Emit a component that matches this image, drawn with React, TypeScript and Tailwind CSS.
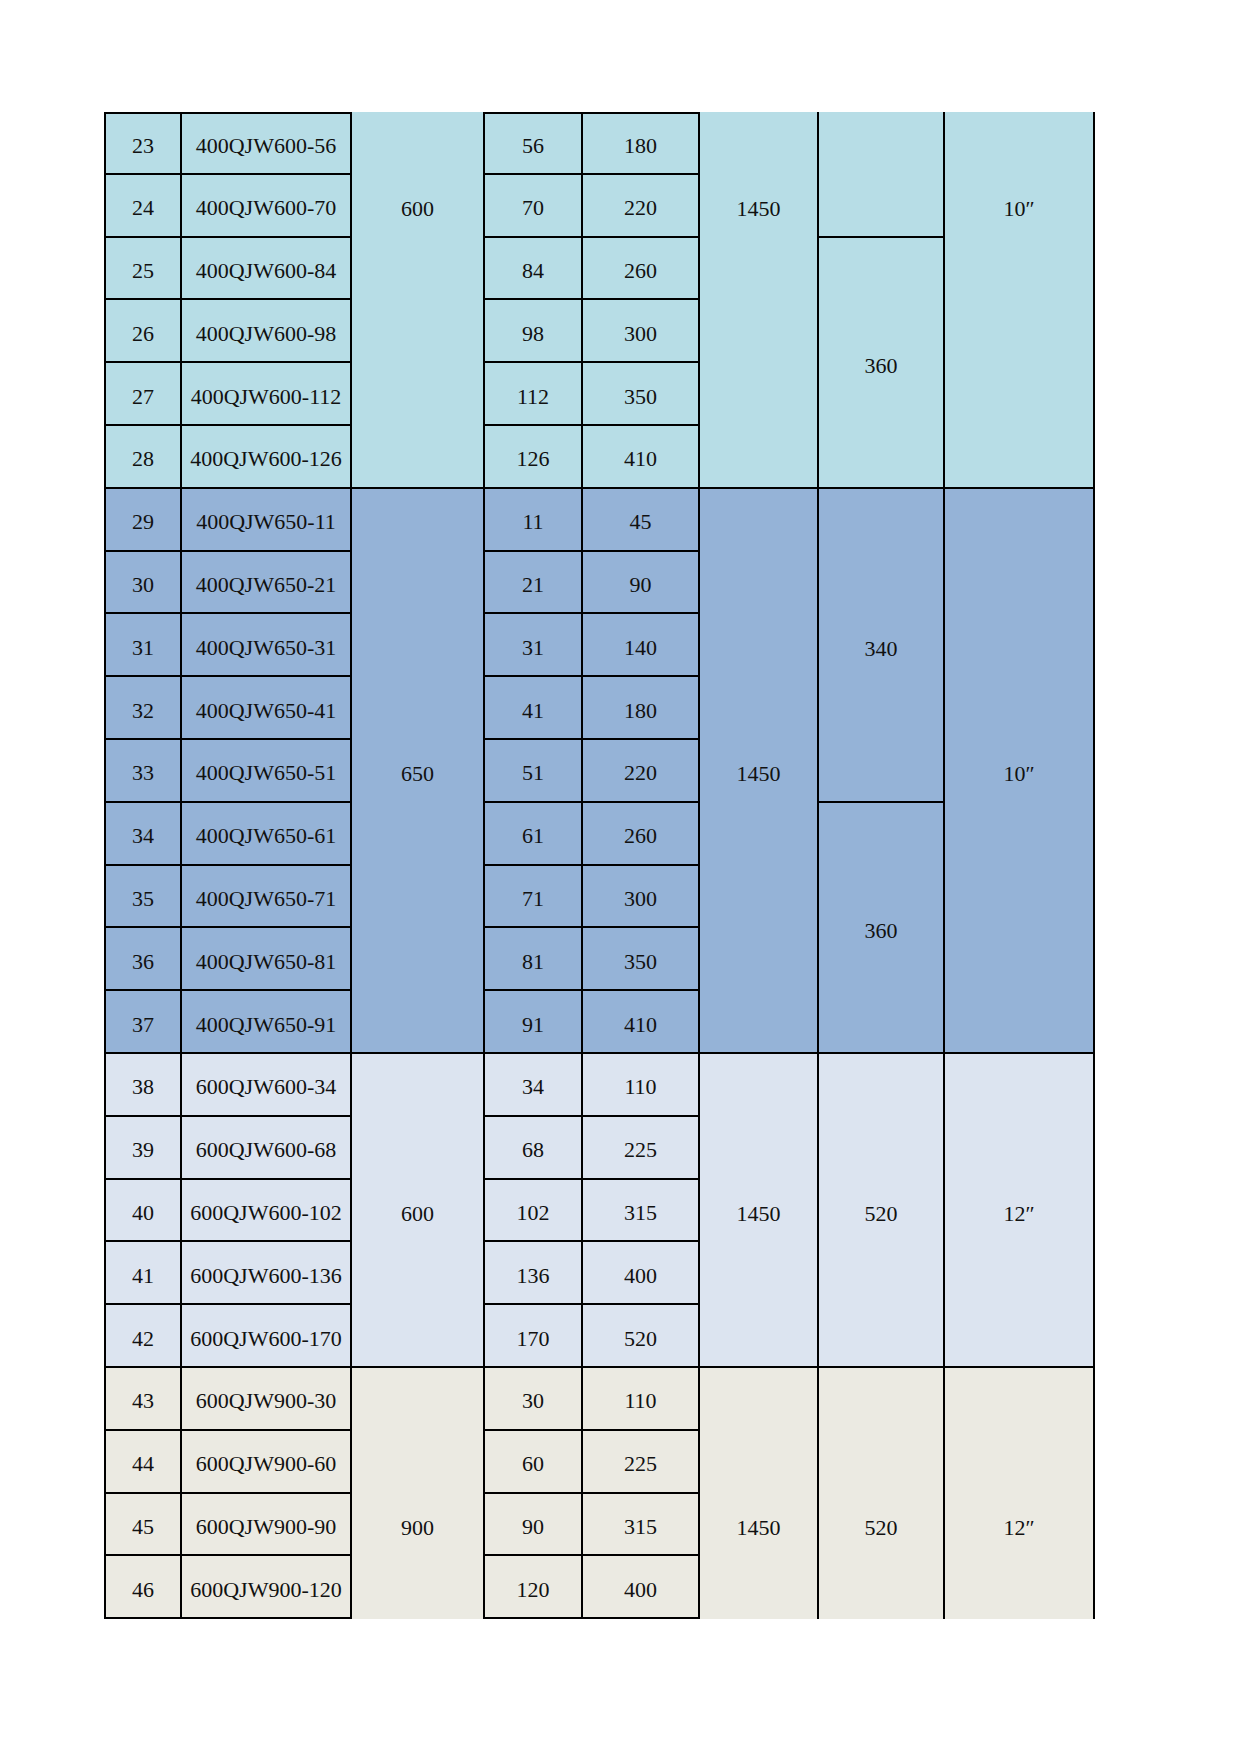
import React from "react";

type Row = [number, string, number, number];
type Seg = { label: string; span: number; at: string };
type Group = {
  bg: string;
  rows: Row[];
  flow: string;
  speed: string;
  size: string;
  at: string; // where the text of the merged columns sits
  power: Seg[];
};

const spanClass: Record<number, string> = {
  2: "row-span-2",
  4: "row-span-4",
  5: "row-span-5",
  6: "row-span-6",
  9: "row-span-9",
};

const groups: Group[] = [
  {
    bg: "bg-[#b7dde6]",
    rows: [
      [23, "400QJW600-56", 56, 180],
      [24, "400QJW600-70", 70, 220],
      [25, "400QJW600-84", 84, 260],
      [26, "400QJW600-98", 98, 300],
      [27, "400QJW600-112", 112, 350],
      [28, "400QJW600-126", 126, 410],
    ],
    flow: "600",
    speed: "1450",
    size: "10″",
    at: "row-start-2",
    power: [
      { label: "", span: 2, at: "row-start-1" },
      { label: "360", span: 4, at: "row-start-2 row-span-2" },
    ],
  },
  {
    bg: "bg-[#95b3d7]",
    rows: [
      [29, "400QJW650-11", 11, 45],
      [30, "400QJW650-21", 21, 90],
      [31, "400QJW650-31", 31, 140],
      [32, "400QJW650-41", 41, 180],
      [33, "400QJW650-51", 51, 220],
      [34, "400QJW650-61", 61, 260],
      [35, "400QJW650-71", 71, 300],
      [36, "400QJW650-81", 81, 350],
      [37, "400QJW650-91", 91, 410],
    ],
    flow: "650",
    speed: "1450",
    size: "10″",
    at: "row-start-5",
    power: [
      { label: "340", span: 5, at: "row-start-3" },
      { label: "360", span: 4, at: "row-start-2 row-span-2" },
    ],
  },
  {
    bg: "bg-[#dce4f0]",
    rows: [
      [38, "600QJW600-34", 34, 110],
      [39, "600QJW600-68", 68, 225],
      [40, "600QJW600-102", 102, 315],
      [41, "600QJW600-136", 136, 400],
      [42, "600QJW600-170", 170, 520],
    ],
    flow: "600",
    speed: "1450",
    size: "12″",
    at: "row-start-3",
    power: [{ label: "520", span: 5, at: "row-start-3" }],
  },
  {
    bg: "bg-[#ebeae2]",
    rows: [
      [43, "600QJW900-30", 30, 110],
      [44, "600QJW900-60", 60, 225],
      [45, "600QJW900-90", 90, 315],
      [46, "600QJW900-120", 120, 400],
    ],
    flow: "900",
    speed: "1450",
    size: "12″",
    at: "row-start-3",
    power: [{ label: "520", span: 4, at: "row-start-3" }],
  },
];

const cell = "flex items-center justify-center pt-[6px] border-black";

function Merged({
  span,
  col,
  at,
  text,
  bottom,
}: {
  span: number;
  col: string;
  at: string;
  text: string;
  bottom: boolean;
}) {
  return (
    <div
      className={`${col} ${spanClass[span]} grid grid-rows-subgrid border-r-2 border-black ${
        bottom ? "border-b-2" : ""
      }`}
    >
      <div className={`${at} flex items-center justify-center pt-[6px]`}>{text}</div>
    </div>
  );
}

function GroupBlock({ g, first, last }: { g: Group; first: boolean; last: boolean }) {
  const n = g.rows.length;
  const top = first ? "border-t-2" : "";
  // start row of each power segment
  const segStarts: Record<number, Seg> = {};
  let acc = 0;
  g.power.forEach((s) => {
    segStarts[acc] = s;
    acc += s.span;
  });

  return (
    <div
      className={`grid ${g.bg} grid-cols-[78px_170px_133px_98px_117px_119px_126px_150px] auto-rows-[62.8px]`}
    >
      {g.rows.map((r, i) => {
        const t = i === 0 ? top : "";
        const seg = segStarts[i];
        const segLast = seg ? acc === i + seg.span : false;
        return (
          <React.Fragment key={r[0]}>
            <div className={`col-start-1 ${cell} border-l-2 border-r-2 border-b-2 ${t}`}>{r[0]}</div>
            <div className={`col-start-2 ${cell} border-r-2 border-b-2 ${t}`}>{r[1]}</div>
            {i === 0 && (
              <Merged span={n} col="col-start-3" at={g.at} text={g.flow} bottom={!last} />
            )}
            <div className={`col-start-4 ${cell} border-r-2 border-b-2 ${t}`}>{r[2]}</div>
            <div className={`col-start-5 ${cell} border-r-2 border-b-2 ${t}`}>{r[3]}</div>
            {i === 0 && (
              <Merged span={n} col="col-start-6" at={g.at} text={g.speed} bottom={!last} />
            )}
            {seg && (
              <Merged
                span={seg.span}
                col="col-start-7"
                at={seg.at}
                text={seg.label}
                bottom={!(last && segLast)}
              />
            )}
            {i === 0 && (
              <Merged span={n} col="col-start-8" at={g.at} text={g.size} bottom={!last} />
            )}
          </React.Fragment>
        );
      })}
    </div>
  );
}

export default function App() {
  return (
    <div
      className="w-[1240px] min-h-[1754px] bg-white pl-[104px] pt-[112px] text-[22px] leading-none text-[#111]"
      style={{ fontFamily: '"Liberation Serif", "Times New Roman", serif' }}
    >
      <div className="flex flex-col w-[991px]">
        {groups.map((g, i) => (
          <GroupBlock key={i} g={g} first={i === 0} last={i === groups.length - 1} />
        ))}
      </div>
    </div>
  );
}
